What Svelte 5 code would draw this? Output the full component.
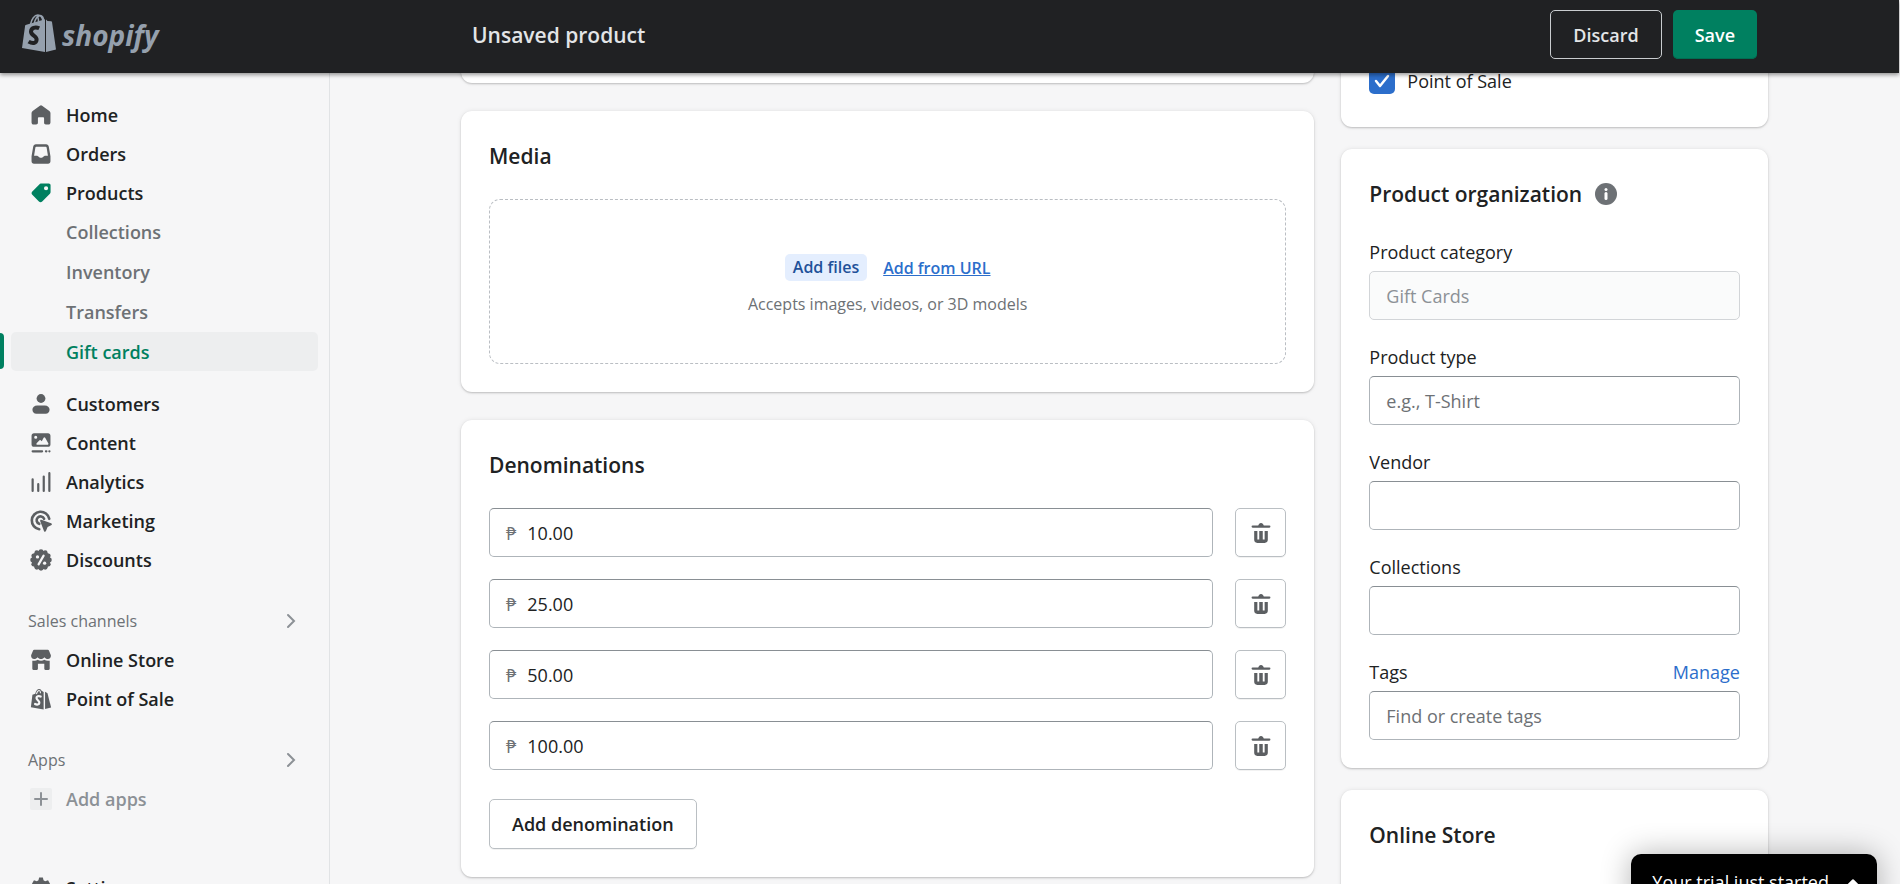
<script>
	const mainLinks = [
		{ name: 'Home', icon: 'home' },
		{ name: 'Orders', icon: 'orders' },
		{ name: 'Products', icon: 'products' }
	]
	const productLinks = ['Collections', 'Inventory', 'Transfers', 'Gift cards']
	const moreLinks = [
		{ name: 'Customers', icon: 'customers' },
		{ name: 'Content', icon: 'content' },
		{ name: 'Analytics', icon: 'analytics' },
		{ name: 'Marketing', icon: 'marketing' },
		{ name: 'Discounts', icon: 'discounts' }
	]
	const channels = [
		{ name: 'Online Store', icon: 'store' },
		{ name: 'Point of Sale', icon: 'pos' }
	]
	const fields = [
		{ id: 'category', label: 'Product category', value: 'Gift Cards', placeholder: '', disabled: true },
		{ id: 'type', label: 'Product type', value: '', placeholder: 'e.g., T-Shirt' },
		{ id: 'vendor', label: 'Vendor', value: '', placeholder: '' },
		{ id: 'collections', label: 'Collections', value: '', placeholder: '' },
		{ id: 'tags', label: 'Tags', value: '', placeholder: 'Find or create tags', manage: true }
	]

	let active = $state('Gift cards')
	let pos = $state(true)
	let denominations = $state(['10.00', '25.00', '50.00', '100.00'])

	const addDenomination = () => {
		denominations.push('')
	}
	const removeDenomination = (i) => {
		denominations.splice(i, 1)
	}

	// scalloped edge of the discounts badge
	const scallops = Array.from({ length: 12 }, (_, i) => {
		const a = (i * Math.PI) / 6
		return { x: 10 + 7.6 * Math.cos(a), y: 10 + 7.6 * Math.sin(a) }
	})
</script>

{#snippet icon(name)}
	<svg class="icon" viewBox="0 0 20 20" aria-hidden="true">
		{#if name == 'home'}
			<path d="M9 1.500a1.600 1.600 0 0 1 2 0l6.600 4.800c.6.5 1 1.100 1 1.900v8.600c0 1.100-.8 1.900-1.900 1.900h-2.300c-.9 0-1.600-.7-1.600-1.600v-4c0-.6-.4-1-1-1H8.200c-.6 0-1 .4-1 1v4c0 .9-.7 1.600-1.600 1.600H3.300c-1.100 0-1.900-.8-1.900-1.900V8.200c0-.8.4-1.400 1-1.900z" />
		{:else if name == 'orders'}
			<path fill-rule="evenodd" d="M5.400 1.200h9.200c1.400 0 2.300.8 2.500 2.200l1.500 8.600v4.600c0 1.300-.9 2.200-2.200 2.200H3.600c-1.300 0-2.200-.9-2.200-2.200V12l1.500-8.600C3.100 2 4 1.200 5.400 1.200zM5.700 3.500c-.5 0-.7.2-.8.7L3.700 11.500h2.400c.7 0 1 .2 1.500.8.8.9 1.400 1.200 2.400 1.200s1.600-.3 2.400-1.200c.5-.6.8-.8 1.500-.8h2.400l-1.200-7.300c-.1-.5-.3-.7-.8-.7z" />
		{:else if name == 'products'}
			<path fill-rule="evenodd" d="M10.800 1.300h6.300c.9 0 1.600.7 1.600 1.600v6.300c0 .6-.2 1.100-.6 1.500l-7 7c-.9.9-2.100.9-3 0l-6-6c-.9-.9-.9-2.100 0-3l7-7c.4-.3 1-.4 1.700-.4zM14.600 7.600a1.900 1.900 0 1 0 0-3.800 1.900 1.900 0 0 0 0 3.800z" />
		{:else if name == 'customers'}
			<circle cx="10" cy="5" r="4" />
			<path d="M6.500 11.300h7c2.400 0 4.300 1.500 4.300 3.700 0 2.300-1.400 3.900-3.600 3.900H5.800c-2.200 0-3.600-1.600-3.600-3.900 0-2.200 1.900-3.700 4.300-3.700z" />
		{:else if name == 'content'}
			<path fill-rule="evenodd" d="M3.600 1.200h12.800c1.300 0 2.200.9 2.200 2.200v7.900c0 1.300-.9 2.200-2.200 2.200H3.600c-1.300 0-2.200-.9-2.200-2.200V3.400c0-1.300.9-2.200 2.200-2.200zM5.200 3.300a1.400 1.400 0 1 0 0 2.800 1.400 1.400 0 0 0 0-2.800zM6.800 11.700h9c.8 0 1.200-.8.8-1.500l-2.800-5c-.4-.7-1-.7-1.400 0l-1.700 3.100-1-.7c-.5-.4-1-.3-1.300.2L6 10.200c-.4.8 0 1.500.8 1.500z" />
			<path class="line" d="M2.400 17.600h8.600M14.500 17.600h.4M17.600 17.600h.1" />
		{:else if name == 'analytics'}
			<path class="line" d="M2.400 7.500v10.600M7.500 12v6.100M12.500 5v13.100M17.600 2v16.100" />
		{:else if name == 'marketing'}
			<path class="line thick" d="M8.400 17.500A8 8 0 1 1 17.500 8M8.400 12.600a3.500 3.500 0 1 1 4.400-4.600" />
			<path d="M10.300 8.900l8.900 3.200c1 .4 1 1.400 0 1.800l-3.200 1.500-1.500 3.700c-.4 1-1.500.9-1.800-.1L9.300 10.200c-.2-.8.2-1.500 1-1.300z" />
		{:else if name == 'discounts'}
			<circle cx="10" cy="10" r="8.600" />
			{#each scallops as s}
				<circle cx={s.x} cy={s.y} r="2.200" />
			{/each}
			<path class="line cut" d="M7.800 14L12.400 6" />
			<circle class="hole" cx="6.800" cy="7.200" r="1.500" />
			<circle class="hole" cx="13.300" cy="12.900" r="1.500" />
		{:else if name == 'store'}
			<path d="M2.800 1.300C3 .9 3.300.7 3.800.7h12.400c.5 0 .8.2 1 .6L19 5.700c.2 2-1 3.500-2.800 3.500-1.300 0-2.300-.7-3.100-1.700-.8 1-1.800 1.700-3.100 1.700S7.700 8.500 6.900 7.500c-.8 1-1.800 1.700-3.100 1.700C2 9.200.8 7.700 1 5.700z" />
			<path d="M2.100 10.600c2 .4 3.700 0 4.800-.8 2 1.200 4.200 1.200 6.200 0 1.100.8 2.700 1.200 4.800.8V18c0 .6-.4 1-1 1h-2.900c-.6 0-1-.4-1-1v-4.500H7.200V18c0 .6-.4 1-1 1H3.100c-.6 0-1-.4-1-1z" />
		{:else if name == 'pos'}
			<path d="M2.200 6.200l2.600-.9C5.400 2.600 6.700.9 8.400.9c1.100 0 1.700.7 2.100 1.700l1.900 1v15.900L.8 17.600z" />
			<path d="M13.700 3.500l2.200 1.200 3.300 13.100-5.500 1.400z" />
			<path class="line s" d="M9.700 7.800C7.800 6.900 5.900 7.600 5.900 9.200c0 2 2.900 2 2.600 4.200-.2 1.700-2.200 2.100-3.900 1.100" />
			<path class="line thread" d="M6 5.200c.4-1.600 1.200-2.900 2.300-2.900.8 0 1.200 1 1.200 2" />
		{:else if name == 'settings'}
			<path fill-rule="evenodd" d="M8.300.5h3.400l.6 2.500 1.500.8 2.600-.8 1.800 3.100-1.900 1.900v4l1.900 1.900-1.800 3.100-2.600-.8-1.500.8-.6 2.500H8.300L7.700 17l-1.500-.8-2.600.8-1.800-3.100L3.700 12V8L1.800 6.100 3.600 3l2.600.8L7.700 3zM10 6.500a3.500 3.500 0 1 0 0 7 3.500 3.500 0 0 0 0-7z" />
		{:else if name == 'trash'}
			<path class="line" d="M2.400 4.200h15.200" />
			<path d="M7.400 4C7.500 2.200 8.600 1 10 1s2.500 1.200 2.600 3z" />
			<path d="M3.800 8.200h2.900v7.600h1.700V8.200h3.200v7.600h1.700V8.200h2.900v8c0 1.700-1.100 2.800-2.800 2.800H6.600c-1.700 0-2.800-1.100-2.800-2.800z" />
		{/if}
	</svg>
{/snippet}

{#snippet navLink(link)}
	<a href="#top" class="link" class:on={link.name == 'Products'}>
		{@render icon(link.icon)}
		{link.name}
	</a>
{/snippet}

{#snippet section(title)}
	<button class="section">
		{title}
		<svg viewBox="0 0 10 16" width="10" height="16" aria-hidden="true"><path d="M2 2l6 6-6 6" /></svg>
	</button>
{/snippet}

<div class="page" id="top">
	<header>
		<a href="#top" class="logo" aria-label="shopify">
			<svg viewBox="0 0 34 39" width="34" height="39" aria-hidden="true">
				<path d="M3 12.500c0-1 .5-1.500 1.400-1.700l18.600-5.600V38L0 34z" />
				<path d="M24 5.400l1.500 1.600 3.600.3c.5 0 .8.3.9.8L34 35.600 24 38z" />
				<path class="handle" d="M8.500 10.500C9.500 5 12.500 1 15.800 1c3 0 4.700 3 5.200 6.500M12.300 9.500C13 5.500 15.500 2.200 18 1.500c2.300-.2 3.500 2.500 3.700 5M16.500 8c0-3-.5-5.500-2-6.500" />
				<path class="ess" d="M17.200 14.300c-4-1.800-8-.4-8.200 3.200-.2 4.200 6 4.200 5.600 8.400-.3 3.600-4.200 4-8 1.700" />
			</svg>
			<span>shopify</span>
		</a>
		<div class="savebar">
			<p>Unsaved product</p>
			<button class="discard">Discard</button>
			<button class="save">Save</button>
		</div>
	</header>

	<div class="body">
		<nav>
			{#each mainLinks as link}
				{@render navLink(link)}
			{/each}
			<div class="sub">
				{#each productLinks as name}
					<a href="#top" class="link" class:active={active == name} onclick={() => (active = name)}>{name}</a>
				{/each}
			</div>
			{#each moreLinks as link}
				{@render navLink(link)}
			{/each}
			{@render section('Sales channels')}
			{#each channels as link}
				{@render navLink(link)}
			{/each}
			{@render section('Apps')}
			<a href="#top" class="link add">
				<svg class="icon plus" viewBox="0 0 22 22" aria-hidden="true"><path d="M11 5v12M5 11h12" /></svg>
				Add apps
			</a>
			<div class="bottom">
				{@render navLink({ name: 'Settings', icon: 'settings' })}
			</div>
		</nav>

		<main>
			<div class="layout">
				<div class="primary">
					<section class="card stub"></section>

					<section class="card">
						<h2>Media</h2>
						<div class="dropzone">
							<div class="actions">
								<button class="files">Add files</button>
								<a href="#top">Add from URL</a>
							</div>
							<p>Accepts images, videos, or 3D models</p>
						</div>
					</section>

					<section class="card">
						<h2>Denominations</h2>
						<div class="rows">
							{#each denominations as value, i}
								<div class="row">
									<label class="money">
										<span>₱</span>
										<input type="text" aria-label="Denomination {i + 1}" bind:value={denominations[i]} />
									</label>
									<button class="trash" aria-label="Remove denomination" onclick={() => removeDenomination(i)}>
										{@render icon('trash')}
									</button>
								</div>
							{/each}
						</div>
						<button class="plain" onclick={addDenomination}>Add denomination</button>
					</section>
				</div>

				<div class="secondary">
					<section class="card channels">
						<label class="check">
							<input type="checkbox" bind:checked={pos} />
							Point of Sale
						</label>
					</section>

					<section class="card">
						<h2>
							Product organization
							<svg viewBox="0 0 22 22" width="22" height="22" aria-hidden="true">
								<circle cx="11" cy="11" r="11" />
								<circle class="dot" cx="11" cy="6.500" r="1.500" />
								<path d="M11 10.500v5" />
							</svg>
						</h2>
						<div class="fields">
							{#each fields as field}
								<div class="field">
									<div class="label">
										<label for={field.id}>{field.label}</label>
										{#if field.manage}<a href="#top">Manage</a>{/if}
									</div>
									<input
										type="text"
										id={field.id}
										value={field.value}
										placeholder={field.placeholder}
										disabled={field.disabled}
									/>
								</div>
							{/each}
						</div>
					</section>

					<section class="card last">
						<h2>Online Store</h2>
					</section>
				</div>
			</div>
		</main>
	</div>

	<button class="trial">
		Your trial just started
		<svg viewBox="0 0 14 8" width="12" height="7" aria-hidden="true"><path d="M1 8c-1 0-1.300-1-.6-1.700L5.600 1c.8-.9 2-.9 2.800 0l5.200 5.300c.7.700.4 1.700-.6 1.700z" /></svg>
	</button>
</div>

<style>
	:global(body) {
		background: #f6f6f7;
		color: #202223;
		font-family: 'Open Sans', 'Noto Sans', sans-serif;
		font-size: 18px;
		line-height: 26px;
	}
	.page {
		height: 100vh;
		display: flex;
		flex-direction: column;
		overflow: hidden;
		position: relative;
	}
	button,
	input {
		font: inherit;
		color: inherit;
		margin: 0;
		box-sizing: border-box;
	}
	button {
		cursor: pointer;
	}
	a {
		color: #2c6ecb;
		text-decoration: none;
	}
	h2,
	p {
		margin: 0;
	}

	header {
		flex: none;
		height: 73px;
		margin-right: 1px;
		background: #202123;
		box-shadow: 0 2px 4px rgba(0, 0, 0, 0.4);
		display: flex;
		z-index: 2;
	}
	.logo {
		flex: none;
		width: 330px;
		padding: 14px 0 0 22px;
		box-sizing: border-box;
		display: flex;
		gap: 6px;
		color: #95a0ad;
	}
	.logo svg {
		fill: #95a0ad;
	}
	.logo .handle {
		fill: none;
		stroke: #95a0ad;
		stroke-width: 1.500;
	}
	.logo .ess {
		fill: none;
		stroke: #202123;
		stroke-width: 4;
	}
	.logo span {
		font-size: 28px;
		line-height: 42px;
		font-weight: 700;
		font-style: italic;
	}
	.savebar {
		flex: 1;
		max-width: 1307px;
		margin: 0 auto;
		padding: 10px 11px 14px;
		box-sizing: border-box;
		display: flex;
		gap: 11px;
		color: #e3e5e7;
		font-weight: 600;
	}
	.savebar p {
		flex: 1;
		font-size: 21px;
		line-height: 50px;
	}
	.savebar button {
		border-radius: 5px;
		padding: 0 22px;
		font-weight: 600;
	}
	.discard {
		background: none;
		border: 1px solid #c9cccf;
	}
	.save {
		background: #008060;
		border: 0;
		color: #fff;
		box-shadow: inset 0 -1px 0 #006e52;
	}

	.body {
		flex: 1;
		min-height: 0;
		margin-right: 1px;
		display: flex;
	}
	nav {
		flex: none;
		width: 330px;
		box-sizing: border-box;
		border-right: 1px solid #e1e3e5;
		padding: 22px 11px 0;
		overflow: hidden;
		display: flex;
		flex-direction: column;
	}
	.link {
		flex: none;
		height: 39px;
		padding-left: 19px;
		display: flex;
		align-items: center;
		gap: 14px;
		color: #202223;
		font-weight: 600;
		border-radius: 5px;
		position: relative;
	}
	.icon {
		flex: none;
		width: 22px;
		height: 22px;
		fill: #5c5f62;
	}
	.on .icon {
		fill: #008060;
	}
	.icon .line {
		fill: none;
		stroke: #5c5f62;
		stroke-width: 2;
		stroke-linecap: round;
	}
	.icon .thick {
		stroke-width: 2.400;
	}
	.icon .cut,
	.icon .s,
	.icon .thread {
		stroke: #f6f6f7;
	}
	.icon .thread {
		stroke-width: 1;
	}
	.icon .hole {
		fill: #f6f6f7;
	}
	.sub {
		padding-bottom: 13px;
		display: grid;
		gap: 1px;
	}
	.sub .link {
		padding-left: 55px;
		color: #6d7175;
	}
	.sub .active {
		background: #edeeef;
		color: #008060;
	}
	.sub .active::before {
		content: '';
		position: absolute;
		left: -11px;
		top: 1px;
		bottom: 2px;
		width: 4px;
		border-radius: 0 4px 4px 0;
		background: #008060;
	}
	.section {
		flex: none;
		height: 39px;
		margin-top: 22px;
		padding: 0 22px 0 17px;
		border: 0;
		background: none;
		color: #6d7175;
		font-size: 16px;
		font-weight: 500;
		display: flex;
		align-items: center;
		justify-content: space-between;
	}
	.section svg {
		fill: none;
		stroke: #8c9196;
		stroke-width: 2;
		stroke-linecap: round;
	}
	.add {
		color: #8c9196;
	}
	.plus {
		background: #edeeef;
		border-radius: 2px;
		stroke: #8c9196;
		stroke-width: 2;
		stroke-linecap: round;
	}
	.bottom {
		margin-top: 50px;
	}

	main {
		flex: 1;
		min-width: 0;
		overflow: hidden;
	}
	.layout {
		max-width: 1307px;
		margin: -22px auto 0;
		display: grid;
		grid-template-columns: 2fr 1fr;
		gap: 27px;
		align-items: start;
	}
	.card {
		background: #fff;
		border-radius: 11px;
		padding: 28px;
		box-shadow: 0 0 5px rgba(23, 24, 24, 0.08), 0 1px 2px rgba(0, 0, 0, 0.2);
	}
	.primary {
		display: grid;
		gap: 28px;
	}
	.primary,
	.secondary {
		min-width: 0;
	}
	.secondary {
		display: grid;
		gap: 22px;
	}
	.stub {
		height: 32px;
		padding: 0;
	}
	h2 {
		font-size: 21px;
		line-height: 34px;
		font-weight: 600;
		display: flex;
		align-items: center;
		gap: 13px;
	}
	h2 svg {
		fill: #6d7175;
	}
	h2 .dot {
		fill: #fff;
	}
	h2 path {
		stroke: #fff;
		stroke-width: 3;
		stroke-linecap: round;
	}

	.dropzone {
		margin-top: 26px;
		height: 165px;
		padding-top: 8px;
		box-sizing: border-box;
		border: 1px dashed #babec3;
		border-radius: 11px;
		display: flex;
		flex-direction: column;
		align-items: center;
		justify-content: center;
		gap: 10px;
		font-size: 16px;
		color: #6d7175;
	}
	.actions {
		display: flex;
		align-items: center;
		gap: 16px;
		font-weight: 600;
	}
	.actions a {
		text-decoration: underline;
	}
	.files {
		height: 27px;
		border: 0;
		border-radius: 5px;
		padding: 0 8px;
		background: #e4eefe;
		color: #1f5199;
		line-height: 27px;
	}

	.rows {
		margin-top: 26px;
		display: grid;
		gap: 22px;
	}
	.row {
		display: flex;
		gap: 22px;
	}
	.money,
	.field input {
		height: 49px;
		box-sizing: border-box;
		border: 1px solid #aeb4b9;
		border-top-color: #898f94;
		border-radius: 5px;
		background: #fff;
	}
	.money {
		flex: 1;
		padding-left: 16px;
		display: flex;
		align-items: center;
		gap: 11px;
	}
	.money span {
		color: #6d7175;
	}
	.money input {
		flex: 1;
		min-width: 0;
		border: 0;
		padding: 0;
		background: none;
	}
	.trash,
	.plain {
		background: #fff;
		border: 1px solid #babfc3;
		border-radius: 5px;
		box-shadow: 0 1px 0 rgba(0, 0, 0, 0.05);
	}
	.trash {
		width: 51px;
		padding: 0;
		display: grid;
		place-items: center;
	}
	.plain {
		height: 50px;
		margin-top: 29px;
		padding: 0 22px;
		font-weight: 600;
	}

	.channels {
		padding-top: 17px;
		padding-bottom: 33px;
	}
	.check {
		display: flex;
		align-items: center;
		gap: 12px;
	}
	.check input {
		appearance: none;
		width: 26px;
		height: 26px;
		border-radius: 5px;
		background: #2c6ecb url("data:image/svg+xml,%3Csvg xmlns='http://www.w3.org/2000/svg' viewBox='0 0 26 26'%3E%3Cpath d='M7 13l4 5 8-10' fill='none' stroke='white' stroke-width='2.500' stroke-linecap='round' stroke-linejoin='round'/%3E%3C/svg%3E");
	}
	.check input:not(:checked) {
		background: #fff;
		border: 2px solid #8c9196;
	}
	.fields {
		margin-top: 28px;
		display: grid;
		gap: 24px;
	}
	.label {
		display: flex;
		justify-content: space-between;
		margin-bottom: 6px;
	}
	.field input {
		display: block;
		width: 100%;
		padding: 0 16px;
	}
	.field input::placeholder {
		color: #6d7175;
		opacity: 1;
	}
	.field input:disabled {
		background: #fafbfb;
		border-color: #d2d5d8;
		color: #8c9196;
	}
	.last {
		height: 100px;
	}

	.trial {
		position: absolute;
		right: 23px;
		bottom: -26px;
		height: 56px;
		padding: 0 18px 0 21px;
		border: 0;
		border-radius: 10px;
		background: #000;
		color: #fff;
		box-shadow: 0 0 30px rgba(0, 0, 0, 0.3);
		display: flex;
		align-items: center;
		gap: 18px;
		z-index: 3;
	}
	.trial svg {
		fill: #fff;
	}
</style>
